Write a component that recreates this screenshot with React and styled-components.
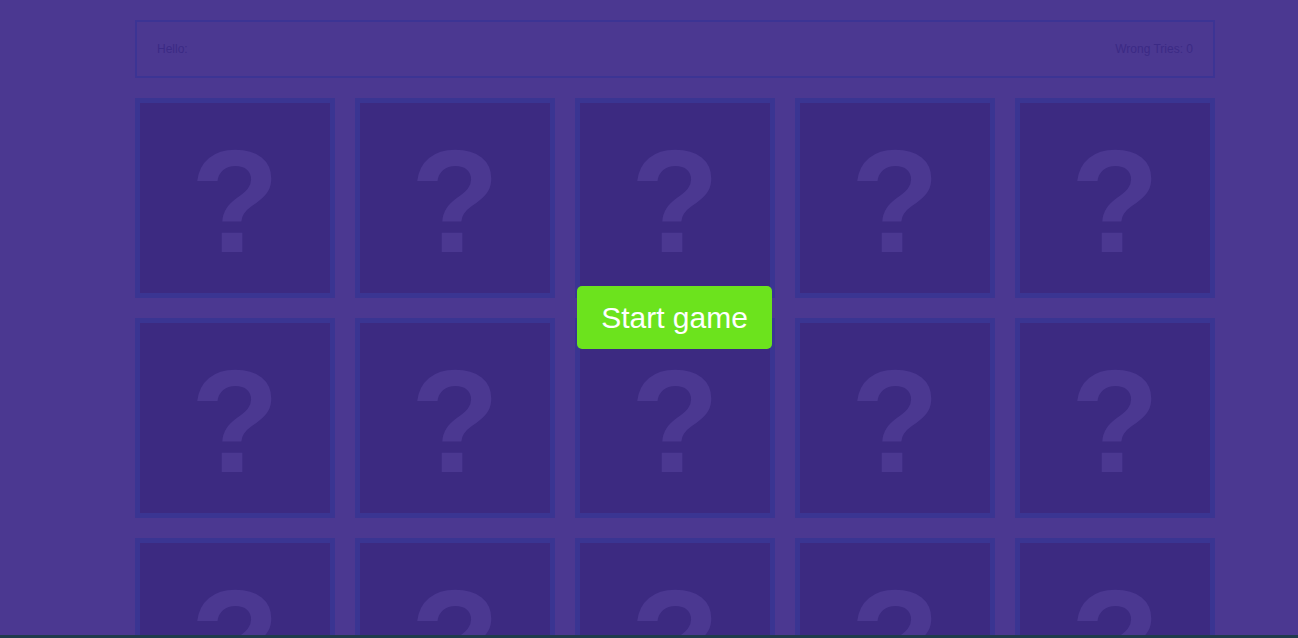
import React from "react";
import styled, { createGlobalStyle } from "styled-components";

const Global = createGlobalStyle`
  html, body { margin: 0; padding: 0; background: #4b3891; overflow: hidden; }
  body { font-family: "Liberation Sans", Arial, sans-serif; }
`;

const Page = styled.div`
  position: relative;
  width: 1080px;
  margin-left: 135px;
  padding-top: 20px;
`;

const Header = styled.header`
  display: flex;
  justify-content: space-between;
  align-items: center;
  height: 58px;
  box-sizing: border-box;
  border: 2px solid #3c3494;
  padding: 0 20px;
  font-size: 12px;
  color: #3b2a85;
`;

const Grid = styled.div`
  display: grid;
  grid-template-columns: repeat(5, 200px);
  gap: 20px;
  margin-top: 20px;
`;

const Card = styled.div`
  width: 200px;
  height: 200px;
  box-sizing: border-box;
  border: 5px solid #3a3592;
  background: #3c2a81;
  display: flex;
  align-items: center;
  justify-content: center;
  color: #4b3891;
  font-family: "Liberation Sans", Arial, sans-serif;
  font-weight: bold;
  font-size: 146px;
  line-height: 1;
  padding-top: 8px;
`;

const Overlay = styled.div`
  position: absolute;
  left: 0;
  right: 0;
  top: 286px;
  display: flex;
  justify-content: center;
`;

const StartButton = styled.button`
  width: 195px;
  height: 63px;
  margin-right: 1px;
  border: none;
  border-radius: 5px;
  background: #6ce31d;
  color: #fff;
  font-family: "Liberation Sans", Arial, sans-serif;
  font-size: 30px;
  cursor: pointer;
`;

const BottomBar = styled.div`
  position: fixed;
  left: 0;
  right: 0;
  bottom: 0;
  height: 3px;
  background: #1f3b4c;
`;

export default function App() {
  const cards = Array.from({ length: 15 });
  return (
    <>
      <Global />
      <Page>
        <Header>
          <span>Hello:</span>
          <span>Wrong Tries: 0</span>
        </Header>
        <Grid>
          {cards.map((_, i) => (
            <Card key={i}>?</Card>
          ))}
        </Grid>
        <Overlay>
          <StartButton>Start game</StartButton>
        </Overlay>
      </Page>
      <BottomBar />
    </>
  );
}
